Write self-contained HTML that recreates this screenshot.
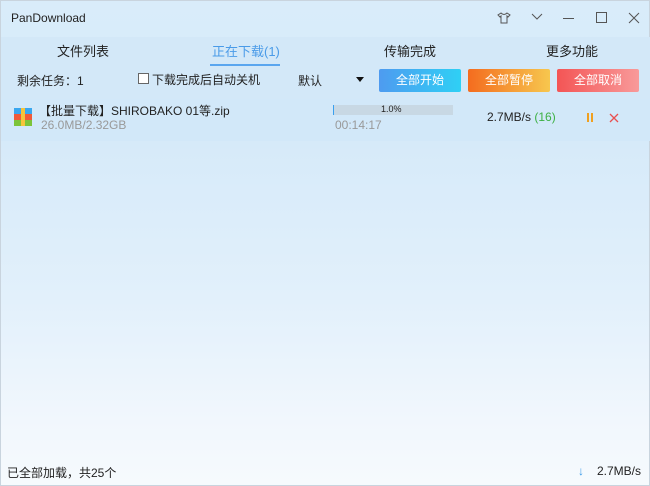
<!DOCTYPE html>
<html><head><meta charset="utf-8"><style>
*{margin:0;padding:0;box-sizing:border-box}
body{width:650px;height:486px;overflow:hidden;font-family:"Liberation Sans","Noto Sans CJK SC",sans-serif;font-size:12px;color:#222;position:relative;
background:linear-gradient(180deg,#d9ecfa 0px,#d6eaf9 140px,#e2f0fb 300px,#f1f7fd 420px,#f6fafd 486px);border:1px solid #c9d4de}
.a{position:absolute;white-space:nowrap}
.title{left:10px;top:10px;font-size:12px}
.tab{top:40px;font-size:13px;color:#222}
.btn{top:68px;height:23px;width:82px;color:#fff;text-align:center;line-height:23px;font-size:12px;border-radius:2px}
</style></head><body>
<div class="a title">PanDownload</div>
<svg class="a" style="left:496px;top:10px" width="14" height="14"><path d="M4 2 L1 4 L3 6 L4 5 V12 H10 V5 L11 6 L13 4 L10 2 Q7 5 4 2Z" fill="none" stroke="#555" stroke-width="1"/></svg>
<svg class="a" style="left:530px;top:12px" width="12" height="8"><path d="M1 1 L6 6 L11 1" fill="none" stroke="#555"/></svg>
<div class="a" style="left:562px;top:17px;width:11px;height:1px;background:#555"></div>
<div class="a" style="left:595px;top:11px;width:11px;height:11px;border:1px solid #555"></div>
<svg class="a" style="left:627px;top:11px" width="12" height="12"><path d="M1 1L11 11M11 1L1 11" stroke="#555"/></svg>
<div class="a" style="left:0;top:36px;width:650px;height:62px;background:#d3e8f8"></div>
<div class="a tab" style="left:56px">文件列表</div>
<div class="a tab" style="left:211px;color:#4a9be8">正在下载(1)</div>
<div class="a" style="left:209px;top:63px;width:70px;height:2px;background:#5aa6ef"></div>
<div class="a tab" style="left:383px">传输完成</div>
<div class="a tab" style="left:545px">更多功能</div>
<div class="a" style="left:16px;top:71px">剩余任务：1</div>
<div class="a" style="left:137px;top:72px;width:11px;height:11px;border:1px solid #666;background:#fff"></div>
<div class="a" style="left:151px;top:70px">下载完成后自动关机</div>
<div class="a" style="left:297px;top:71px">默认</div>
<div class="a" style="left:355px;top:76px;width:0;height:0;border-left:4px solid transparent;border-right:4px solid transparent;border-top:5px solid #111"></div>
<div class="a btn" style="left:378px;background:linear-gradient(90deg,#4e9bf0,#2fd0f5)">全部开始</div>
<div class="a btn" style="left:467px;background:linear-gradient(90deg,#f46c1f,#f7c74e)">全部暂停</div>
<div class="a btn" style="left:556px;background:linear-gradient(90deg,#f45555,#f89a9a)">全部取消</div>
<div class="a" style="left:0;top:98px;width:650px;height:42px;background:#d2e8f9"></div>
<svg class="a" style="left:13px;top:107px" width="18" height="18"><rect x="0" y="0" width="18" height="6" fill="#3aa7ef"/><rect x="0" y="6" width="18" height="6" fill="#f05a3a"/><rect x="0" y="12" width="18" height="6" fill="#7cc43a"/><rect x="7" y="0" width="4" height="18" fill="#f7c43a"/></svg>
<div class="a" style="left:38px;top:101px;font-size:12px">【批量下载】SHIROBAKO 01等.zip</div>
<div class="a" style="left:40px;top:117px;color:#999">26.0MB/2.32GB</div>
<div class="a" style="left:332px;top:104px;width:120px;height:10px;background:#c8d8e4"></div>
<div class="a" style="left:332px;top:104px;width:1px;height:10px;background:#3aa0ef"></div>
<div class="a" style="left:380px;top:103px;font-size:9px">1.0%</div>
<div class="a" style="left:334px;top:117px;color:#999">00:14:17</div>
<div class="a" style="left:486px;top:109px">2.7MB/s <span style="color:#3cb043">(16)</span></div>
<div class="a" style="left:586px;top:112px;width:2px;height:9px;background:#f0a020"></div>
<div class="a" style="left:590px;top:112px;width:2px;height:9px;background:#f0a020"></div>
<svg class="a" style="left:608px;top:112px" width="10" height="10"><path d="M1 1L9 9M9 1L1 9" stroke="#e85050" stroke-width="1.3"/></svg>
<div class="a" style="left:6px;top:463px">已全部加载，共25个</div>
<div class="a" style="left:577px;top:463px;color:#3a9be8;font-weight:bold">&#8595;</div>
<div class="a" style="left:596px;top:463px">2.7MB/s</div>
</body></html>
